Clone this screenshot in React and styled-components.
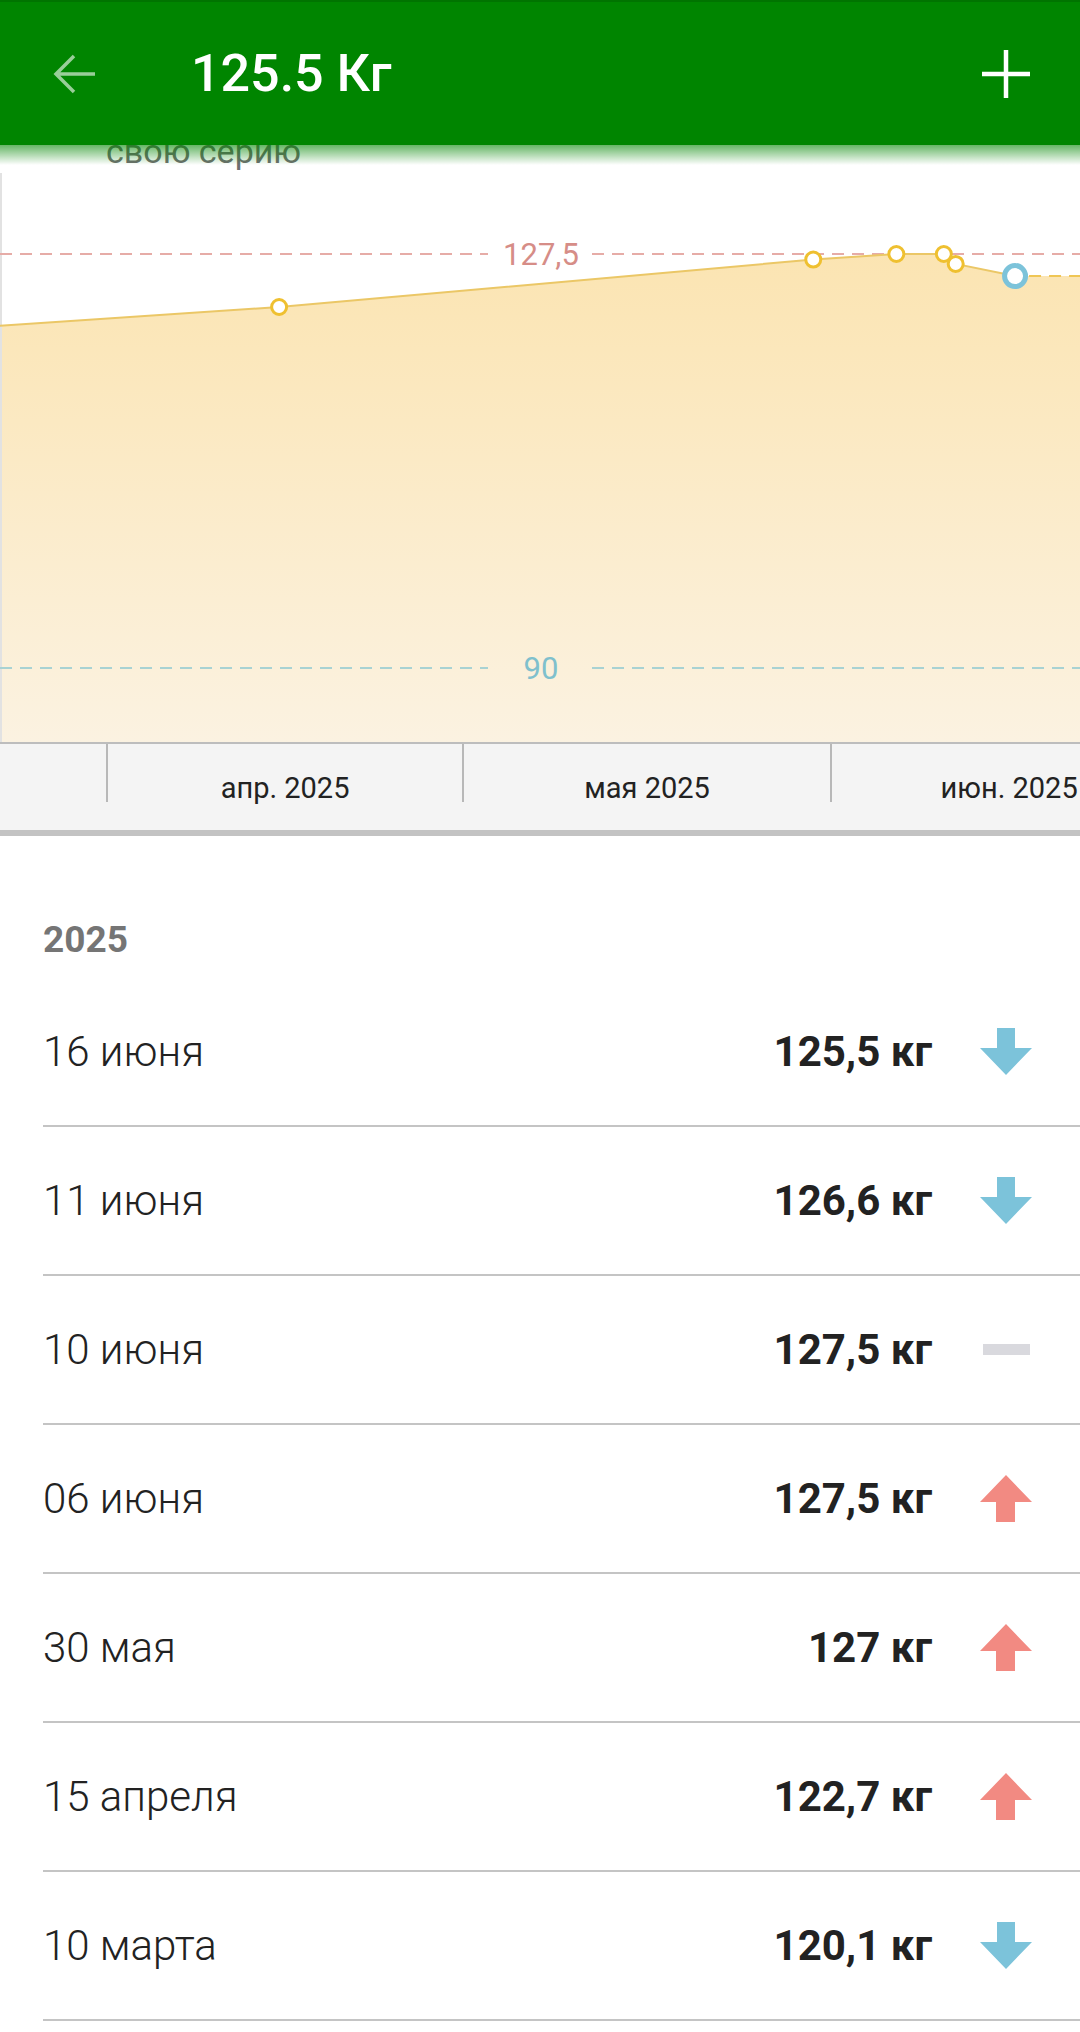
import React from 'react'
import styled, { createGlobalStyle } from 'styled-components'

const GlobalStyle = createGlobalStyle`
	html, body {
		margin: 0;
		padding: 0;
		background: #ffffff;
		font-family: Roboto, "Noto Sans", sans-serif;
	}
`

// chart scale, page pixels
const DAY = 11.87
const APR_1 = Date.UTC(2025, 3, 1)
const APR_X = 107
const CHART_TOP = 145
const CHART_H = 597
const KG_PX = 11.04

const xOf = ([y, m, d]) => APR_X + ((Date.UTC(y, m, d) - APR_1) / 86400000) * DAY
const yOf = (kg) => 254 - CHART_TOP + (127.5 - kg) * KG_PX

const entries = [
	{ label: '16 июня', date: [2025, 5, 16], kg: 125.5, trend: 'down' },
	{ label: '11 июня', date: [2025, 5, 11], kg: 126.6, trend: 'down' },
	{ label: '10 июня', date: [2025, 5, 10], kg: 127.5, trend: 'flat' },
	{ label: '06 июня', date: [2025, 5, 6], kg: 127.5, trend: 'up' },
	{ label: '30 мая', date: [2025, 4, 30], kg: 127, trend: 'up' },
	{ label: '15 апреля', date: [2025, 3, 15], kg: 122.7, trend: 'up' },
	{ label: '10 марта', date: [2025, 2, 10], kg: 120.1, trend: 'down' },
]

const months = [
	{ label: 'апр. 2025', start: [2025, 3, 1], days: 30 },
	{ label: 'мая 2025', start: [2025, 4, 1], days: 31 },
	{ label: 'июн. 2025', start: [2025, 5, 1], days: 30 },
]

const Page = styled.div`
	width: 1080px;
	overflow: hidden;
`

const Topbar = styled.header`
	position: relative;
	z-index: 2;
	box-sizing: border-box;
	height: 145px;
	display: flex;
	align-items: center;
	background: #008500;
	border-top: 2px solid #007400;
	padding: 0 49px 0 52px;

	&::after {
		content: '';
		position: absolute;
		left: 0;
		right: 0;
		top: 100%;
		height: 20px;
		background: linear-gradient(rgba(0, 133, 0, 0.6), rgba(0, 133, 0, 0));
	}
`

const IconButton = styled.button`
	border: 0;
	padding: 0;
	background: none;
	display: flex;
	color: ${(p) => p.$color};
`

const Title = styled.h1`
	flex: 1;
	margin: 0 0 0 95px;
	font-size: 52px;
	font-weight: 500;
	color: #ffffff;
	line-height: 1;
`

const ChartArea = styled.section`
	position: relative;
	z-index: 1;
	height: ${CHART_H}px;
`

const Hint = styled.div`
	position: absolute;
	left: 106px;
	top: -11px;
	font-size: 34px;
	line-height: 34px;
	color: #6e6e6e;
`

const GuideLabel = styled.text`
	font-family: Roboto, sans-serif;
	font-size: 31px;
	fill: ${(p) => p.$color};
`

const Axis = styled.div`
	position: relative;
	height: 86px;
	background: #f4f4f4;
	border-top: 2px solid #bdbdbd;
	border-bottom: 6px solid #c3c3c3;
`

const Tick = styled.span`
	position: absolute;
	top: 0;
	width: 2px;
	height: 58px;
	background: #b8b8b8;
`

const MonthLabel = styled.span`
	position: absolute;
	top: 27px;
	transform: translateX(-50%);
	white-space: nowrap;
	font-size: 29px;
	line-height: 34px;
	color: #222222;
`

const List = styled.section`
	margin-left: 43px;
`

const Year = styled.div`
	box-sizing: border-box;
	height: 142px;
	padding-top: 82px;
	font-size: 37px;
	line-height: 44px;
	font-weight: 700;
	color: #757575;
`

const Row = styled.div`
	display: flex;
	align-items: center;
	height: 147px;
	padding-right: 48px;
	border-bottom: 2px solid #c4c4c4;
`

const DateText = styled.span`
	flex: 1;
	font-size: 42px;
	font-weight: 300;
	color: #222222;
`

const Weight = styled.span`
	font-size: 42px;
	font-weight: 700;
	color: #222222;
	margin-right: 48px;
`

const TrendBox = styled.span`
	width: 52px;
	height: 47px;
	display: flex;
	align-items: center;
	justify-content: center;
`

const Flat = styled.span`
	width: 47px;
	height: 11px;
	background: #d9d9de;
`

const BackIcon = () => (
	<svg width="44" height="40" viewBox="0 0 44 40" fill="none" stroke="currentColor" strokeWidth="3.5">
		<path d="M43 20H4M22 2L4 20l18 18" />
	</svg>
)

const PlusIcon = () => (
	<svg width="50" height="50" viewBox="0 0 50 50" stroke="currentColor" strokeWidth="4.5">
		<path d="M25 1v48M1 25h48" />
	</svg>
)

const Trend = ({ kind }) => {
	if (kind === 'flat') return <TrendBox><Flat /></TrendBox>
	const down = kind === 'down'
	return (
		<TrendBox>
			<svg width="52" height="47" viewBox="0 0 52 47">
				{down ? (
					<polygon points="17,0 35,0 35,20 52,20 26,47 0,20 17,20" fill="#7cc3da" />
				) : (
					<polygon points="26,0 52,27 35,27 35,47 16,47 16,27 0,27" fill="#f28a82" />
				)}
			</svg>
		</TrendBox>
	)
}

const Chart = () => {
	// measurements are taken mid-day, half a day past the tick
	const pts = [...entries].reverse().map((e) => ({ x: xOf(e.date) + DAY / 2, y: yOf(e.kg) }))
	const last = pts[pts.length - 1]
	const line = pts.map((p, i) => `${i ? 'L' : 'M'}${p.x.toFixed(1)} ${p.y.toFixed(1)}`).join(' ')
	const area = `${line} L1080 ${last.y.toFixed(1)} L1080 ${CHART_H} L${pts[0].x.toFixed(1)} ${CHART_H} Z`
	const yHigh = yOf(127.5)
	const yLow = yOf(90)

	return (
		<ChartArea>
			<Hint>свою серию</Hint>
			<svg width="1080" height={CHART_H} viewBox={`0 0 1080 ${CHART_H}`}>
				<defs>
					<linearGradient id="fill" x1="0" y1="100" x2="0" y2={CHART_H} gradientUnits="userSpaceOnUse">
						<stop offset="0" stopColor="#fbe4b1" />
						<stop offset="1" stopColor="#fbf2e1" />
					</linearGradient>
				</defs>
				<path d={area} fill="url(#fill)" />
				<line x1="1" y1="28" x2="1" y2={CHART_H} stroke="#e2e2e2" strokeWidth="2" />

				<g strokeDasharray="12 8" strokeWidth="2">
					<line x1="0" y1={yHigh} x2="488" y2={yHigh} stroke="#e6aca7" />
					<line x1="592" y1={yHigh} x2="1080" y2={yHigh} stroke="#e6aca7" />
					<line x1="0" y1={yLow} x2="488" y2={yLow} stroke="#a8d2d3" />
					<line x1="592" y1={yLow} x2="1080" y2={yLow} stroke="#a8d2d3" />
					<line x1={last.x + 14} y1={last.y} x2="1080" y2={last.y} stroke="#efc655" />
				</g>
				<GuideLabel x="541" y={yHigh + 11} textAnchor="middle" $color="#d68d87">127,5</GuideLabel>
				<GuideLabel x="541" y={yLow + 11} textAnchor="middle" $color="#7fc0cd">90</GuideLabel>

				<path d={line} fill="none" stroke="#ebc766" strokeWidth="2" />
				{pts.slice(0, -1).map((p, i) => (
					<circle key={i} cx={p.x} cy={p.y} r="7.5" fill="#ffffff" stroke="#efc030" strokeWidth="3" />
				))}
				<circle cx={last.x} cy={last.y} r="10.5" fill="#ffffff" stroke="#7cc3da" strokeWidth="5" />
			</svg>
		</ChartArea>
	)
}

const DateAxis = () => (
	<Axis>
		{months.map((m) => {
			const x = xOf(m.start)
			return (
				<React.Fragment key={m.label}>
					<Tick style={{ left: x - 1 }} />
					<MonthLabel style={{ left: x + (m.days * DAY) / 2 }}>{m.label}</MonthLabel>
				</React.Fragment>
			)
		})}
	</Axis>
)

const App = () => {
	return (
		<Page>
			<GlobalStyle />
			<Topbar>
				<IconButton $color="rgba(255,255,255,0.6)"><BackIcon /></IconButton>
				<Title>125.5 Кг</Title>
				<IconButton $color="#ffffff"><PlusIcon /></IconButton>
			</Topbar>
			<Chart />
			<DateAxis />
			<List>
				<Year>2025</Year>
				{entries.map((e) => (
					<Row key={e.label}>
						<DateText>{e.label}</DateText>
						<Weight>{String(e.kg).replace('.', ',')} кг</Weight>
						<Trend kind={e.trend} />
					</Row>
				))}
			</List>
		</Page>
	)
}

export default App
